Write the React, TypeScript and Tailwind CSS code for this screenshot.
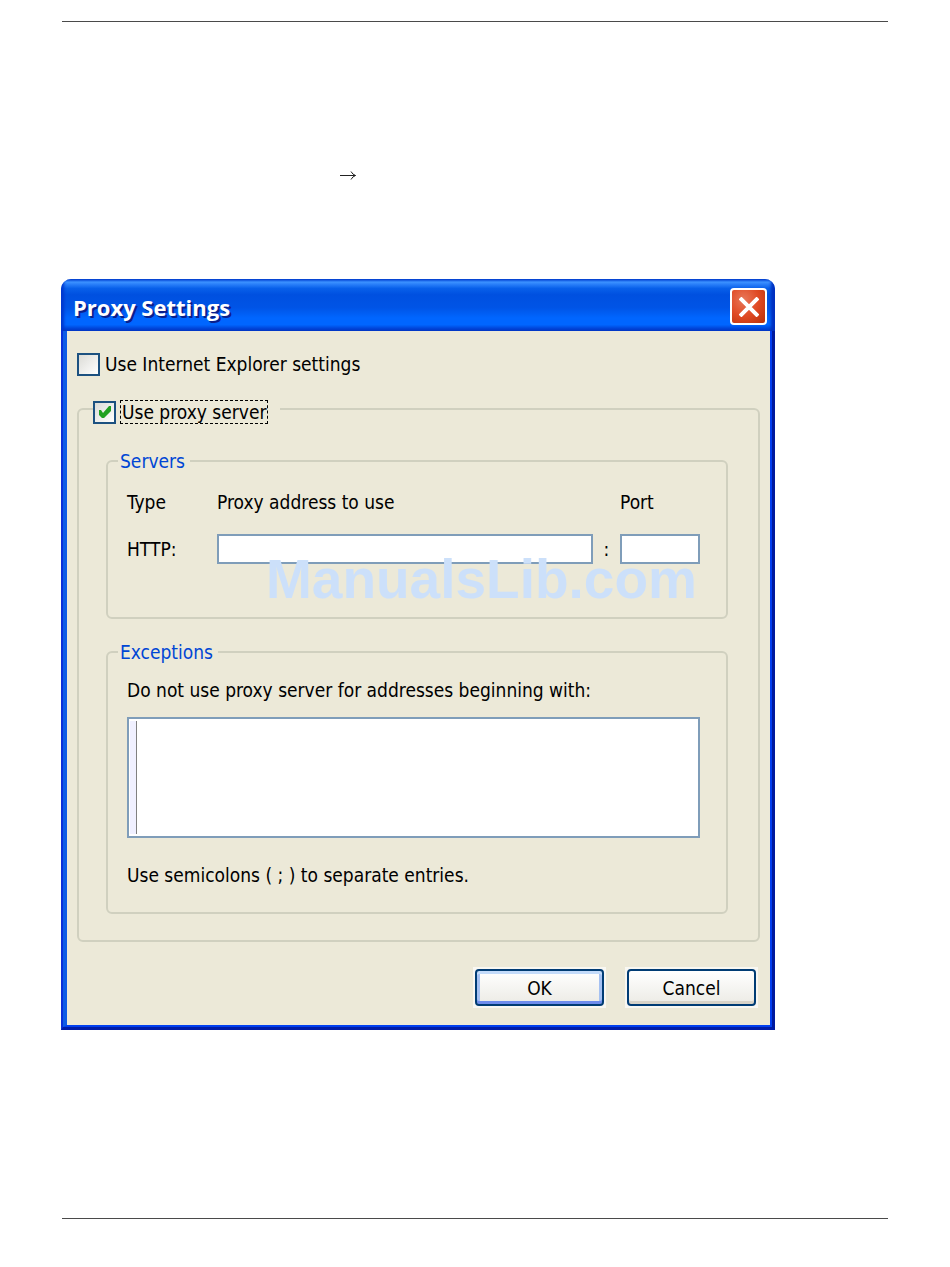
import type { ReactNode } from 'react';

interface CheckboxProps {
  id: string;
  defaultChecked?: boolean;
}

function Checkbox({ id, defaultChecked }: CheckboxProps) {
  return (
    <span className="relative block size-[23px] shrink-0">
      <input
        id={id}
        type="checkbox"
        defaultChecked={defaultChecked}
        className="peer block size-full appearance-none border-2 border-[#1c5180] bg-linear-to-br from-[#dcdcd7] to-white outline-none"
      />
      <svg
        viewBox="0 0 23 23"
        className="pointer-events-none absolute inset-0 hidden size-full fill-[#21a121] peer-checked:block"
      >
        <path d="M6 9h2l2 3 6-7h2v5l-7 7H9l-3-3z" />
      </svg>
    </span>
  );
}

interface GroupProps {
  title: string;
  className: string;
  children: ReactNode;
}

function Group({ title, className, children }: GroupProps) {
  return (
    <fieldset className={`min-w-0 rounded-md border-2 border-[#d0d0bf] pr-[26px] pl-[19px] ${className}`}>
      <legend className="-ml-[9px] pr-[5px] pl-[2px] text-[#0046d5]">{title}</legend>
      {children}
    </fieldset>
  );
}

const buttonBase =
  'block h-[37px] w-[129px] rounded-[4px] border-2 border-[#003c74] bg-linear-to-b from-white to-[#ecebe5]';

export default function App() {
  return (
    <main className="relative bg-white pt-[21px] pr-[62px] pb-12 pl-[61px] font-['DejaVu_Sans_Condensed','DejaVu_Sans',sans-serif] text-[19px] leading-6 text-black">
      <hr className="ml-px border-[#4a4a4a]" />

      <div className="mt-[148px] pl-[279px]">
        <svg viewBox="0 0 16 10" className="block h-[10px] w-4 fill-none stroke-[#222]">
          <path d="M0 5.5H15.5M11 1.5Q12.5 4.5 15.5 5.5Q12.5 6.500 11 9.500" />
        </svg>
      </div>

      {/* Dialog window */}
      <section className="mt-[99px] max-w-[714px] overflow-hidden rounded-t-[10px]">
        <header className="flex h-[52px] items-center justify-between pt-[3px] pr-2 pl-3 shadow-[inset_-4px_0_3px_#0030c0,inset_3px_0_3px_#0038d0] [background-image:linear-gradient(to_bottom,#0a58e0_0%,#3c92ff_6%,#2a80fa_10%,#0860ea_18%,#0050e0_30%,#0054e6_55%,#0066ff_75%,#0066ff_88%,#004ade_94%,#003fc6_100%)]">
          <h1 className="font-['Open_Sans',sans-serif] text-[22px] font-bold text-white [text-shadow:2px_2px_0_#0a1f8c]">
            Proxy Settings
          </h1>
          <button
            type="button"
            aria-label="Close"
            className="flex size-[37px] items-center justify-center rounded-[4px] border-2 border-white bg-radial-[at_35%_30%] from-[#e8785a] via-[#e04a24] to-[#b83008]"
          >
            <svg viewBox="0 0 20 20" className="size-5 stroke-white stroke-[4]">
              <path d="M1 1L19 19M19 1L1 19" />
            </svg>
          </button>
        </header>

        {/* Frame: dark outer edge, lighter inner edge */}
        <div className="border-r-[3px] border-b-[3px] border-l-2 border-r-[#001a9e] border-b-[#001ca8] border-l-[#0831d9]">
          <div className="border-r-2 border-b-2 border-l-4 border-r-[#003df0] border-b-[#0040f0] border-l-[#0d5ce6] bg-[#ece9d8] px-[10px] pt-[21px] pb-[17px]">
            <div className="flex h-6 items-center gap-[5px]">
              <Checkbox id="use-ie" />
              <label htmlFor="use-ie">Use Internet Explorer settings</label>
            </div>

            <fieldset className="mt-[18px] min-w-0 rounded-md border-2 border-[#d0d0bf] pt-[25px] pr-[30px] pb-[26px] pl-[27px]">
              <legend className="-ml-[13px] flex items-center gap-[4px] pt-[6px] pr-3">
                <Checkbox id="use-proxy" defaultChecked />
                <label htmlFor="use-proxy" className="h-6 border border-dashed border-black px-px leading-[22px]">
                  Use proxy server
                </label>
              </legend>

              <Group title="Servers" className="pt-[17px] pb-[53px]">
                <div className="grid grid-cols-[90px_1fr_27px_80px] items-center gap-y-5">
                  <span>Type</span>
                  <label htmlFor="address">Proxy address to use</label>
                  <span />
                  <label htmlFor="port">Port</label>

                  <span>HTTP:</span>
                  <input
                    id="address"
                    type="text"
                    className="h-[30px] w-full min-w-0 border-2 border-[#7f9db9] bg-white px-1 outline-none"
                  />
                  <span className="text-center">:</span>
                  <input
                    id="port"
                    type="text"
                    className="h-[30px] w-full min-w-0 border-2 border-[#7f9db9] bg-white px-1 outline-none"
                  />
                </div>
              </Group>

              <Group title="Exceptions" className="mt-[21px] pt-[14px] pb-[25px]">
                <label htmlFor="exceptions" className="block">
                  Do not use proxy server for addresses beginning with:
                </label>
                <div className="mt-[15px] flex h-[121px] border-2 border-[#7f9db9] bg-white py-0.5 pl-px">
                  <div className="w-[7px] border-r border-[#808080] bg-[#f0f0ff]" />
                  <textarea id="exceptions" className="block min-w-0 flex-1 resize-none px-1 outline-none" />
                </div>
                <p className="mt-[25px]">Use semicolons ( ; ) to separate entries.</p>
              </Group>
            </fieldset>

            <div className="mt-[25px] flex justify-end gap-[19px] pr-0.5">
              <div className="bg-[#f8f7f2] p-0.5">
                <button
                  type="button"
                  className={`${buttonBase} shadow-[inset_0_3px_0_#c3dbfa,inset_0_-3px_0_#6e8cec,inset_3px_0_0_#a5c1f2,inset_-3px_0_0_#a5c1f2]`}
                >
                  OK
                </button>
              </div>
              <div className="bg-[#f8f7f2] p-0.5">
                <button type="button" className={`${buttonBase} shadow-[inset_0_-3px_0_#d8d3c8]`}>
                  Cancel
                </button>
              </div>
            </div>
          </div>
        </div>
      </section>

      <hr className="mt-[188px] ml-px border-[#4a4a4a]" />

      <div className="pointer-events-none absolute top-[547px] left-[266px] font-['Liberation_Sans',sans-serif] text-[55px] leading-[64px] font-bold text-[#cce0fa]">
        ManualsLib.com
      </div>
    </main>
  );
}
